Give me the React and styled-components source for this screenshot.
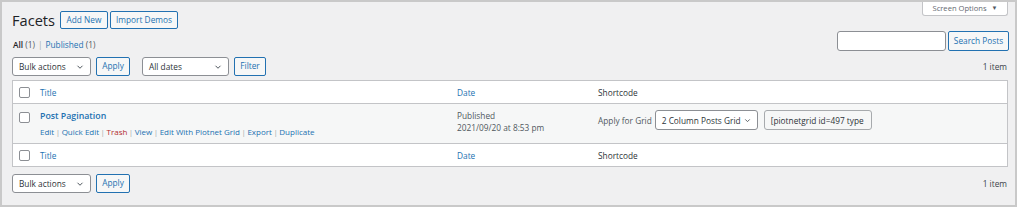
import styled, { createGlobalStyle } from 'styled-components'

const GlobalStyle = createGlobalStyle`
  html, body {
    margin: 0;
    padding: 0;
    background: #fff;
  }
  body {
    font-family: "Open Sans", "Noto Sans", sans-serif;
    font-size: 8.3px;
    color: #3c434a;
  }
  * { box-sizing: border-box; }
`

const Frame = styled.div`
  width: 1017px;
  height: 207px;
  border: 2px solid #c9c9c9;
  background: #f0f0f1;
  padding: 0 7px 0 10px;
`

const TopBar = styled.div`
  display: flex;
  justify-content: space-between;
  align-items: flex-start;
`

const TitleGroup = styled.div`
  display: flex;
  align-items: center;
  gap: 2px;
  margin-top: 9px;
`

const Heading = styled.h1`
  margin: 0 3px 0 0;
  font-size: 14.6px;
  font-weight: 400;
  line-height: 18px;
  color: #1d2327;
`

const ScreenTab = styled.button`
  width: 86px;
  height: 14px;
  padding: 0 0 1px;
  border: 1px solid #c3c4c7;
  border-top: none;
  border-radius: 0 0 3px 3px;
  background: #fff;
  color: #646970;
  font: inherit;
  font-size: 7.6px;
  display: flex;
  align-items: center;
  justify-content: center;
  gap: 5px;

  span { font-size: 6px; color: #50575e; }
`

const Button = styled.button`
  height: ${({ $h }) => $h || 19}px;
  width: ${({ $w }) => $w}px;
  padding: 0;
  border: 1px solid #2271b1;
  border-radius: 2px;
  background: #f6f7f7;
  color: #2271b1;
  font: inherit;
  font-size: 8.3px;
  line-height: 1;
  display: inline-flex;
  align-items: center;
  justify-content: center;
`

const SubRow = styled.div`
  display: flex;
  justify-content: space-between;
  align-items: flex-end;
  margin-top: 2px;
`

const Views = styled.div`
  line-height: 12px;
  padding-left: 1px;
  color: #646970;

  b { font-weight: 600; color: #1d2327; }
  a { color: #2271b1; text-decoration: none; }
  .sep { color: #a7aaad; margin: 0 3px; }
  .count { color: #50575e; font-weight: 400; }
`

const SearchBox = styled.div`
  display: flex;
  gap: 2px;
  margin-right: -1px;
`

const TextInput = styled.div`
  width: ${({ $w }) => $w}px;
  height: 20px;
  border: 1px solid ${({ $readonly }) => ($readonly ? '#a7aaad' : '#8c8f94')};
  border-radius: 3px;
  background: ${({ $readonly }) => ($readonly ? '#f6f7f7' : '#fff')};
  color: #2c3338;
  padding: 0 6px;
  display: flex;
  align-items: center;
  white-space: nowrap;
  overflow: hidden;
`

const Tablenav = styled.div`
  display: flex;
  justify-content: space-between;
  align-items: center;
  margin-top: ${({ $mt }) => $mt}px;
`

const Actions = styled.div`
  display: flex;
  align-items: center;
  gap: 5px;
`

const Spacer = styled.div`
  width: 2px;
`

const SelectBox = styled.div`
  width: ${({ $w }) => $w}px;
  height: ${({ $h }) => $h || 19}px;
  border: 1px solid #8c8f94;
  border-radius: 3px;
  background: #fff;
  color: #2c3338;
  padding: 0 5px 0 6px;
  display: flex;
  align-items: center;
  justify-content: space-between;
  white-space: nowrap;

  svg { flex: none; }
`

const Count = styled.div`
  color: #3c434a;
  padding-right: 1px;
`

const Table = styled.div`
  margin-top: 4px;
  border: 1px solid #c3c4c7;
  background: #fff;
`

const Row = styled.div`
  display: grid;
  grid-template-columns: 27px 417px 141px 1fr;
  align-items: ${({ $top }) => ($top ? 'start' : 'center')};
  height: ${({ $h }) => $h}px;
  background: ${({ $alt }) => ($alt ? '#f6f7f7' : '#fff')};
  border-top: ${({ $bt }) => ($bt ? '1px solid #c3c4c7' : 'none')};
  border-bottom: ${({ $bb }) => ($bb ? '1px solid #c3c4c7' : 'none')};
`

const Check = styled.span`
  display: block;
  width: 11px;
  height: 11px;
  margin-left: 6px;
  margin-top: ${({ $mt }) => $mt || 0}px;
  border: 1px solid #8c8f94;
  border-radius: 2px;
  background: #fff;
`

const HeadCell = styled.div`
  color: ${({ $link }) => ($link ? '#2271b1' : '#2c3338')};
  padding-top: 1px;
`

const TitleCell = styled.div`
  padding-top: 6px;

  strong {
    display: block;
    color: #2271b1;
    font-weight: 600;
    font-size: 8.8px;
    line-height: 13px;
  }
`

const RowActions = styled.div`
  margin-top: 3px;
  line-height: 12px;
  font-size: 8px;
  color: #a7aaad;

  a { color: #2271b1; text-decoration: none; }
  a.trash { color: #b32d2e; }
  i { font-style: normal; margin: 0 1.5px; }
`

const DateCell = styled.div`
  padding-top: 6px;
  color: #50575e;
  line-height: 12px;
`

const ShortcodeCell = styled.div`
  display: flex;
  align-items: center;
  gap: 6px;
  padding-top: 6px;

  label { color: #50575e; margin-right: -3px; }
`

function Chevron({ size = 10 }) {
  return (
    <svg width={size} height={size} viewBox="0 0 20 20">
      <path d="M5 7.5l5 5 5-5" fill="none" stroke="#50575e" strokeWidth="2" />
    </svg>
  )
}

const rowLinks = ['Edit', 'Quick Edit', 'Trash', 'View', 'Edit With Piotnet Grid', 'Export', 'Duplicate']

function BulkBar({ mt, withFilter }) {
  return (
    <Tablenav $mt={mt}>
      <Actions>
        <SelectBox $w={79}>
          Bulk actions <Chevron />
        </SelectBox>
        <Button $w={34}>Apply</Button>
        {withFilter && (
          <>
            <Spacer />
            <SelectBox $w={87}>
              All dates <Chevron />
            </SelectBox>
            <Button $w={32}>Filter</Button>
          </>
        )}
      </Actions>
      <Count>1 item</Count>
    </Tablenav>
  )
}

export default function App() {
  return (
    <>
      <GlobalStyle />
      <Frame>
        <TopBar>
          <TitleGroup>
            <Heading>Facets</Heading>
            <Button $w={48} $h={18}>Add New</Button>
            <Button $w={68} $h={18}>Import Demos</Button>
          </TitleGroup>
          <ScreenTab>
            Screen Options <span>▼</span>
          </ScreenTab>
        </TopBar>

        <SubRow>
          <Views>
            <b>All <span className="count">(1)</span></b>
            <span className="sep">|</span>
            <a href="#">Published <span className="count">(1)</span></a>
          </Views>
          <SearchBox>
            <TextInput $w={109} />
            <Button $w={61} $h={20}>Search Posts</Button>
          </SearchBox>
        </SubRow>

        <BulkBar mt={6} withFilter />

        <Table>
          <Row $h={23} $bb>
            <Check $mt={1} />
            <HeadCell $link>Title</HeadCell>
            <HeadCell $link>Date</HeadCell>
            <HeadCell>Shortcode</HeadCell>
          </Row>
          <Row $h={39} $alt $top>
            <Check $mt={8} />
            <TitleCell>
              <strong>Post Pagination</strong>
              <RowActions>
                {rowLinks.map((l, i) => (
                  <span key={l}>
                    {i > 0 && <i>|</i>}
                    <a href="#" className={l === 'Trash' ? 'trash' : undefined}>{l}</a>
                  </span>
                ))}
              </RowActions>
            </TitleCell>
            <DateCell>
              Published
              <br />
              2021/09/20 at 8:53 pm
            </DateCell>
            <ShortcodeCell>
              <label>Apply for Grid</label>
              <SelectBox $w={103} $h={20}>
                2 Column Posts Grid <Chevron size={9} />
              </SelectBox>
              <TextInput $w={108} $readonly>[piotnetgrid id=497 type</TextInput>
            </ShortcodeCell>
          </Row>
          <Row $h={23} $bt>
            <Check $mt={1} />
            <HeadCell $link>Title</HeadCell>
            <HeadCell $link>Date</HeadCell>
            <HeadCell>Shortcode</HeadCell>
          </Row>
        </Table>

        <BulkBar mt={7} />
      </Frame>
    </>
  )
}
